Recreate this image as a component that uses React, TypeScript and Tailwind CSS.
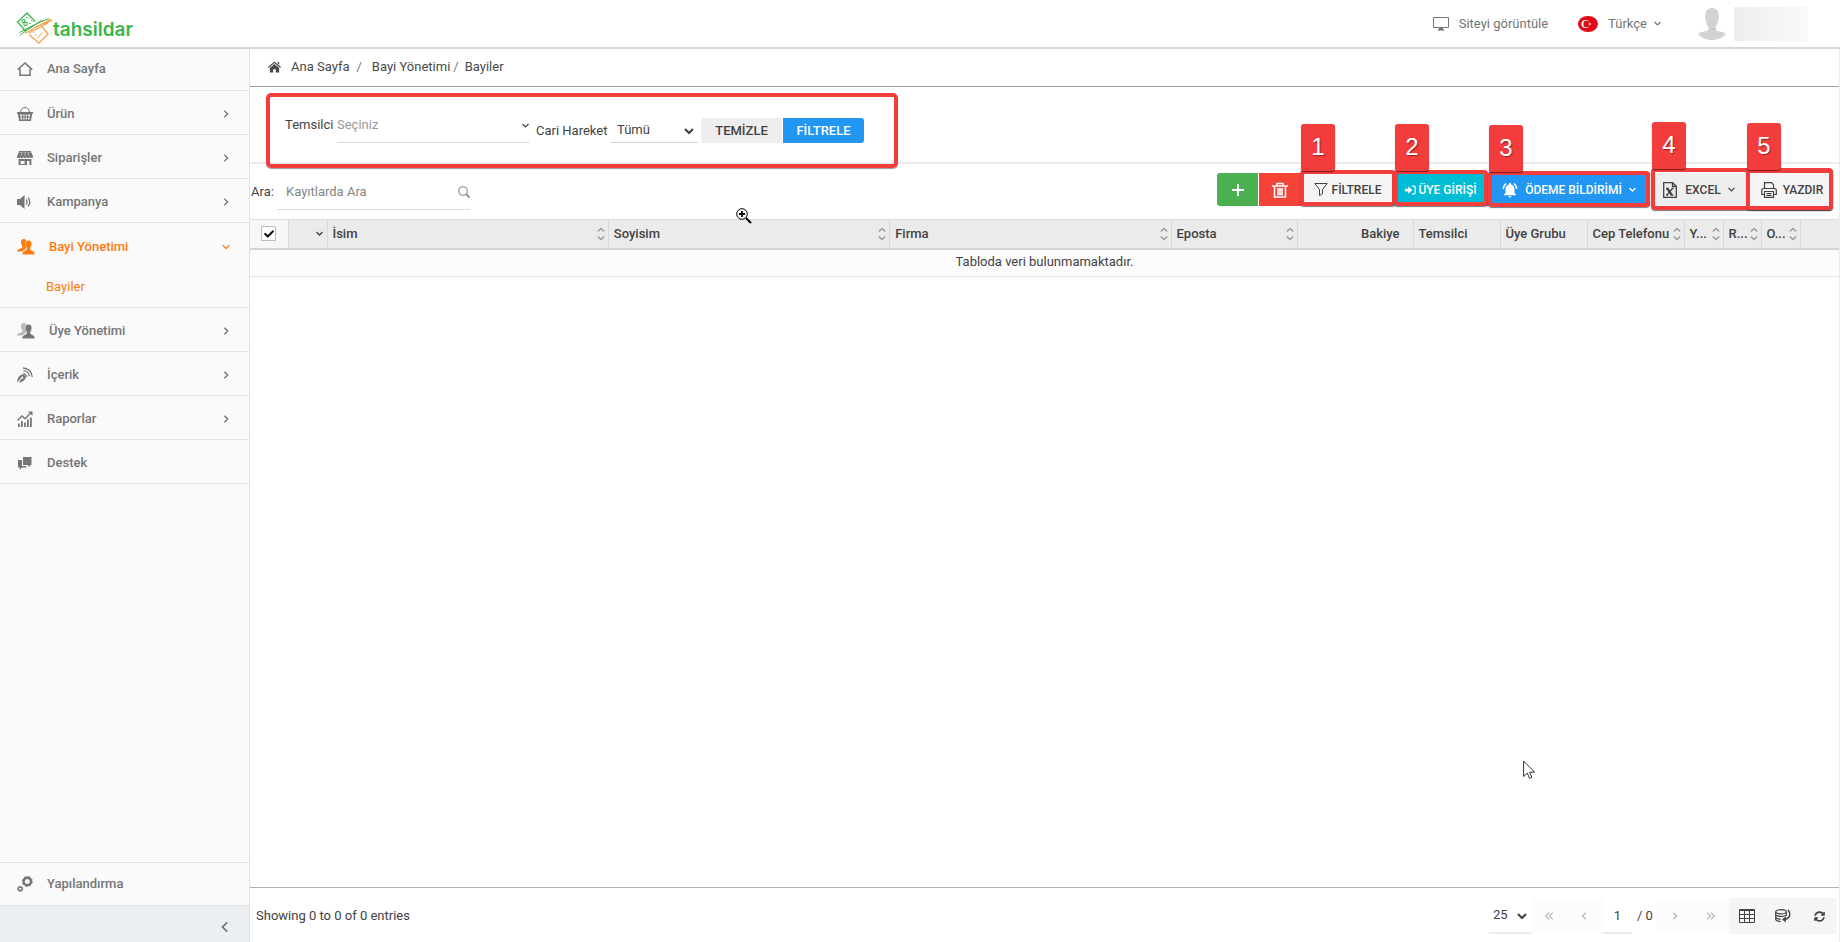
import type { ReactNode } from 'react';
import clsx from 'clsx';
import { MdNotificationsActive } from 'react-icons/md';
import { FaSyncAlt, FaCheck } from 'react-icons/fa';

type Dir = 'left' | 'right' | 'down' | 'up';

const chevrons: Record<Dir, string> = {
  left: 'M7 2 3 6l4 4',
  right: 'M4 2l4 4-4 4',
  down: 'M2 4l4 4 4-4',
  up: 'M2 8l4-4 4 4',
};

const Chevron = ({ dir, size = 10, width = 1.6, className }: { dir: Dir; size?: number; width?: number; className?: string }) => (
  <svg viewBox="0 0 12 12" width={size} height={size} fill="none" stroke="currentColor" strokeWidth={width} className={clsx('shrink-0', className)}>
    <path d={chevrons[dir]} />
  </svg>
);

const DoubleChevron = ({ dir }: { dir: 'left' | 'right' }) => (
  <svg viewBox="0 0 12 12" width="10" height="10" fill="none" stroke="currentColor" strokeWidth="1.5">
    <path d={dir === 'left' ? 'M6 2 2 6l4 4M10.500 2l-4 4 4 4' : 'M6 2l4 4-4 4M1.500 2l4 4-4 4'} />
  </svg>
);

const Icon = ({ children, size = 16 }: { children: ReactNode; size?: number }) => (
  <svg viewBox="0 0 16 16" width={size} height={size} fill="currentColor" className="shrink-0">
    {children}
  </svg>
);

const HomeIcon = () => (
  <Icon>
    <path d="M.8 8.600 8 2l7.200 6.600M3 8v6.200h10V8" fill="none" stroke="currentColor" strokeWidth="1.5" />
  </Icon>
);

const BasketIcon = () => (
  <Icon>
    <path d="M3.600 6.500C3.600 3.500 5.500 1.500 8 1.500s4.400 2 4.400 5" fill="none" stroke="currentColor" />
    <path d="M0 6h16v1.800h-.8L13.900 15H2.100L.8 7.800H0z" />
    <path d="M3 8.600h2.200v1.800H3.200zM6.300 8.600h1.300v1.800H6.300zM8.700 8.600h1.300v1.800H8.700zM11 8.600h2.200l-.3 1.800H11zM3.400 11.600h1.800v1.800H3.700zM6.300 11.600h1.300v1.800H6.300zM8.700 11.600h1.300v1.800H8.700zM11 11.600h1.700l-.3 1.800H11z" fill="#fafafa" />
  </Icon>
);

const StoreIcon = () => (
  <Icon>
    <path d="M2 1h12v1.200H2zM1.600 2.600h12.800L16 6.400c0 1-.7 1.600-1.600 1.600s-1.600-.6-1.600-1.600c0 1-.7 1.600-1.600 1.600s-1.600-.6-1.600-1.600C9.600 7.400 8.900 8 8 8s-1.600-.6-1.600-1.600C6.400 7.400 5.700 8 4.800 8s-1.600-.6-1.600-1.600C3.200 7.400 2.500 8 1.600 8S0 7.400 0 6.400z" />
    <path d="M1.600 9h12.800v6H1.600z" />
    <path d="M3.600 11h4v3h-4zM10 11h2.400v4H10z" fill="#fafafa" />
    <path d="M4.500 2.600v3.200M8 2.600v3.200M11.500 2.600v3.200" stroke="#fafafa" strokeWidth=".5" />
  </Icon>
);

const SpeakerIcon = () => (
  <Icon>
    <path d="M0 5h3l4.500-4v14L3 11H0z" />
    <path d="M9 5.500c1.300 1.200 1.300 3.800 0 5M11 3.800c2.400 2.200 2.400 6.200 0 8.400" fill="none" stroke="currentColor" strokeWidth="1.300" />
  </Icon>
);

const UsersIcon = ({ faded }: { faded?: boolean }) => (
  <svg viewBox="0 0 18 16" width="18" height="16" fill="currentColor" className="shrink-0">
    <path opacity={faded ? 0.5 : 1} d="M7 0c-2 0-3.200 1.300-3 3.600.1 1.600.7 2.800 1.300 3.600.2 1.300-.3 1.700-1.600 2.200C1.800 10.100 0 10.500 0 12.500h5l4-3V1C8.500.3 7.800 0 7 0z" />
    <path stroke="#fafafa" strokeWidth=".5" d="M11.500 1.200c2.200 0 3.500 1.500 3.300 4-.1 1.700-.8 3-1.500 3.900-.1 1.400.3 1.900 1.500 2.400 1.700.7 3.200 1.400 3.200 4.200H5c0-2.800 1.500-3.500 3.200-4.200 1.200-.5 1.600-1 1.500-2.400C9 8.200 8.300 6.900 8.200 5.200c-.2-2.500 1.100-4 3.300-4z" />
  </svg>
);

const PenIcon = () => (
  <Icon>
    <path d="M0 15.500C.6 11 1.500 8.700 6 7l3 3c-1.200 4-3.500 5-7.500 5.500l3.600-3.900a1 1 0 1 0-.8-.8z" />
    <path d="M6.500 6.300l3.400 3.400M6.500 3.600c3.200 0 5.500 2.500 5.700 5.700M6 1c5 0 8.800 3.600 9.200 9" fill="none" stroke="currentColor" strokeWidth="1.300" />
  </Icon>
);

const ReportIcon = () => (
  <Icon>
    <path d="M1 12.500h1.800V16H1zM4 10h1.800v6H4zM7 11.500h1.800V16H7zM10 8.500h1.800V16H10zM13 6.500h1.800V16H13z" />
    <path d="M.6 9.500 5 5l3 2.800 5.500-5.600" fill="none" stroke="currentColor" strokeWidth="1.400" />
    <path d="M11 .5h4.500V5z" />
  </Icon>
);

const ChatIcon = () => (
  <Icon>
    <path d="M6 2h8.500v8H13v2.300L10.500 10H6z" />
    <path d="M1 5h4v6h4.500v1.500H5L2.800 15v-2.500H1z" />
  </Icon>
);

const GearsIcon = () => (
  <Icon>
    <circle cx="10.300" cy="5.500" r="3.700" fill="none" stroke="currentColor" strokeWidth="2.400" />
    <circle cx="10.300" cy="5.500" r="5" fill="none" stroke="currentColor" strokeWidth=".9" strokeDasharray="1.960" />
    <circle cx="3.200" cy="12.800" r="1.900" fill="none" stroke="currentColor" strokeWidth="1.500" />
    <circle cx="3.200" cy="12.800" r="2.700" fill="none" stroke="currentColor" strokeWidth=".7" strokeDasharray="1.060" />
  </Icon>
);

const Logo = () => (
  <a href="#" className="flex items-center font-['Inter',sans-serif] text-[19px] leading-6 font-semibold text-[#3bb54a]">
    <svg viewBox="0 0 36 32" width="36" height="32" fill="none" strokeWidth="1">
      <path d="M19 9.500 11 1 1.500 10l8 9" stroke="#3bb54a" strokeWidth="1.300" />
      <circle cx="7.500" cy="9" r="1.500" stroke="#3bb54a" strokeWidth="1.200" />
      <circle cx="9.500" cy="11.800" r="1.700" stroke="#3bb54a" strokeWidth="1.200" />
      <path d="M12 5.500l1.500 1.500M15 8l1.500 1.500M10 5l1 1M13 11l2 1" stroke="#3bb54a" />
      <path d="M3.500 20.500 22 11l11-4.500M4 23 26 8M7 18.500 18 13.500" stroke="#3bb54a" />
      <path d="M13 22.500l10 8.500 9-9-7-8.500" stroke="#f7a04b" strokeWidth="1.300" />
      <path d="M9 21.500 24 13 35.500 7M20 14.500 36 8.500M13 21 32 11" stroke="#f7a04b" strokeWidth="1.200" />
      <path d="M19 22l1.500 1.500M21 26l2.500-2 3-3.500M17 21l1-1" stroke="#f7a04b" />
    </svg>
    <span className="pt-1 pl-px">tahsildar</span>
  </a>
);

const Header = () => (
  <header className="flex h-[49px] shrink-0 items-center justify-between border-b-2 border-[#d8d8d8] bg-white pr-8 pl-4 text-[#757575]">
    <div className="pt-2">
      <Logo />
    </div>
    <div className="flex items-center">
      <a href="#" className="flex items-center gap-[10px]">
        <svg viewBox="0 0 16 14" width="16" height="14" fill="none" stroke="currentColor">
          <path d="M.5.500h15v10H.5z" />
          <path d="M6.500 11h3v2h1.500H5h1.500z" fill="currentColor" />
        </svg>
        Siteyi görüntüle
      </a>
      <button type="button" className="ml-[30px] flex items-center">
        <svg viewBox="0 0 20 16" width="20" height="16">
          <ellipse cx="10" cy="8" rx="10" ry="8" fill="#e30a17" />
          <circle cx="7.500" cy="8" r="4" fill="#fff" />
          <circle cx="8.500" cy="8" r="3.200" fill="#e30a17" />
          <path d="M10 8l1.200-.4.100-1.200.8 1 1.200-.4-.7 1 .7 1-1.200-.4-.8 1-.1-1.200z" fill="#fff" />
        </svg>
        <span className="mr-[6px] ml-[10px]">Türkçe</span>
        <Chevron dir="down" size={9} width={1.5} />
      </button>
      <svg viewBox="0 0 28 32" width="28" height="32" className="ml-[36px]" fill="#d3d3d3">
        <path d="M14 0c4.500 0 7 3.500 6.800 9-.2 5.500-2.800 10.500-4.300 11.500h-5C10 19.500 7.400 14.500 7.200 9 7 3.500 9.500 0 14 0z" />
        <path d="M10.500 20.500h7l1 2.500c5 .6 7.500 1.500 9.500 2.700C25 29.500 20 32 14 32S3 29.500 0 25.700C2 24.500 4.500 23.600 9.500 23z" />
        <path d="M10.500 19.500c2.500 1.500 4.500 1.500 7 0l.5 2.500h-4z" fill="#c0c0c0" />
      </svg>
      <div className="ml-2 h-[34px] w-[74px] bg-linear-to-r from-[#eeeeee] to-[#f9f9f9]" />
    </div>
  </header>
);

interface MenuItem {
  label: string;
  icon: ReactNode;
  arrow?: boolean;
}

const MenuLink = ({ item, active }: { item: MenuItem; active?: boolean }) => (
  <a href="#" className={clsx('flex flex-1 items-center pr-[18px] pl-[17px] font-medium', active && 'font-bold text-[#ff7a0f]')}>
    {item.icon}
    <span className="ml-[14px] flex-1">{item.label}</span>
    {item.arrow && <Chevron dir={active ? 'down' : 'right'} />}
  </a>
);

const row = 'flex h-11 border-b border-[#e4e4e4] pt-[2px]';

const topItems: MenuItem[] = [
  { label: 'Ürün', icon: <BasketIcon />, arrow: true },
  { label: 'Siparişler', icon: <StoreIcon />, arrow: true },
  { label: 'Kampanya', icon: <SpeakerIcon />, arrow: true },
];

const bottomItems: MenuItem[] = [
  { label: 'Üye Yönetimi', icon: <UsersIcon faded />, arrow: true },
  { label: 'İçerik', icon: <PenIcon />, arrow: true },
  { label: 'Raporlar', icon: <ReportIcon />, arrow: true },
  { label: 'Destek', icon: <ChatIcon /> },
];

const Sidebar = () => (
  <nav className="flex w-[250px] shrink-0 flex-col border-r border-[#e2e2e2] bg-[#fafafa] text-[#757575]">
    <ul className="flex-1">
      <li className="flex h-[42px] border-b border-[#e4e4e4] pb-[2px]">
        <MenuLink item={{ label: 'Ana Sayfa', icon: <HomeIcon /> }} />
      </li>
      {topItems.map((item) => (
        <li key={item.label} className={row}>
          <MenuLink item={item} />
        </li>
      ))}
      <li className="border-b border-[#e4e4e4]">
        <div className="flex h-11 pt-[3px]">
          <MenuLink active item={{ label: 'Bayi Yönetimi', icon: <UsersIcon />, arrow: true }} />
        </div>
        <a href="#" className="flex h-10 items-center pl-[46px] text-[#ff7a0f]">
          Bayiler
        </a>
      </li>
      {bottomItems.map((item) => (
        <li key={item.label} className={row}>
          <MenuLink item={item} />
        </li>
      ))}
    </ul>
    <div className="flex h-11 border-y border-[#e4e4e4]">
      <MenuLink item={{ label: 'Yapılandırma', icon: <GearsIcon /> }} />
    </div>
    <button type="button" aria-label="Menüyü daralt" className="flex h-9 items-center justify-end bg-[#eceff1] pt-[6px] pr-4">
      <Chevron dir="left" size={14} width={1.5} />
    </button>
  </nav>
);

const Breadcrumb = () => (
  <div className="flex h-[38px] shrink-0 items-center border-b border-[#9e9e9e] pb-[2px] pl-[18px] text-[#4a4a4a]">
    <svg viewBox="0 0 14 12" width="13" height="12" fill="currentColor">
      <path d="M7 0l7 6-.8 1L7 1.800.8 7 0 6zM10.500.5H12v3l-1.500-1.300z" />
      <path d="M7 2.900l5 4.200V12H8.400V8.500H5.600V12H2V7.100z" />
    </svg>
    <a href="#" className="ml-[10px]">Ana Sayfa</a>
    <span className="mr-[10px] ml-[7px] text-[#777777]">/</span>
    <a href="#">Bayi Yönetimi</a>
    <span className="mr-[6px] ml-[3px] text-[#777777]">/</span>
    <a href="#">Bayiler</a>
  </div>
);

const FilterPanel = () => (
  <div className="flex border-b-2 border-[#ececec] pl-4">
    <form className="relative flex items-end pt-5 pr-[34px] pb-[19px] pl-[19px]" onSubmit={(e) => e.preventDefault()}>
      <label htmlFor="temsilci" className="w-[52px] leading-9">Temsilci</label>
      <div className="relative flex items-center">
        <select id="temsilci" className="h-9 w-[193px] appearance-none border-b border-[#dcdcdc] bg-transparent text-[#999999]">
          <option>Seçiniz</option>
        </select>
        <Chevron dir="down" size={9} className="pointer-events-none absolute right-0" />
      </div>
      <label htmlFor="hareket" className="ml-[6px] w-[75px] whitespace-nowrap leading-[25px]">Cari Hareket</label>
      <div className="relative flex items-center">
        <select id="hareket" className="h-[25px] w-[87px] appearance-none border-b border-[#d0d0d0] bg-transparent pl-[6px]">
          <option>Tümü</option>
        </select>
        <Chevron dir="down" size={12} width={2.2} className="pointer-events-none absolute right-[3px]" />
      </div>
      <button type="reset" className="ml-[3px] h-[25px] w-[81px] rounded-l-[3px] bg-[#eeeeee] font-medium">TEMİZLE</button>
      <button type="submit" className="ml-px h-[25px] w-[81px] rounded-r-[3px] bg-[#2196f3] font-medium text-white">FİLTRELE</button>
      <span className="pointer-events-none absolute inset-x-0 top-[6px] -bottom-[6px] z-10 rounded-[5px] border-4 border-[#f33c3c] shadow-[0_1px_1px_#0006]" />
    </form>
  </div>
);

// Numbered red frame laid over a toolbar button
const Marked = ({ step, frame, children }: { step: number; frame: string; children: ReactNode }) => (
  <div className="relative">
    {children}
    <span className={clsx('pointer-events-none absolute rounded-[4px] border-4 border-[#f33c3c] shadow-[0_1px_1px_#0008]', frame)}>
      <span className="absolute -left-[3px] bottom-full mb-[3px] flex h-[47px] w-[34px] items-center justify-center rounded-[3px] bg-[#f33c3c] pb-[2px] font-['Liberation_Sans',sans-serif] text-2xl text-white shadow-[0_1px_1px_#0008] text-shadow-[1px_1px_1px_#0006]">
        {step}
      </span>
    </span>
  </div>
);

const btn = 'flex h-[33px] items-center justify-center whitespace-nowrap text-xs font-medium';

const Toolbar = () => (
  <div className="flex h-[55px] items-center justify-between pr-[6px]">
    <div className="flex items-center">
      <label htmlFor="ara" className="w-[27px] pl-px">Ara:</label>
      <div className="relative flex items-center">
        <input id="ara" type="text" placeholder="Kayıtlarda Ara" className="h-9 w-[193px] border-b border-[#dcdcdc] pl-[9px] placeholder:text-[#858585]" />
        <svg viewBox="0 0 12 12" width="12" height="12" fill="none" stroke="#888888" className="absolute right-0">
          <circle cx="5" cy="5" r="4.300" strokeWidth="1.100" />
          <path d="M8.200 8.200 11.500 11.500" strokeWidth="1.800" />
        </svg>
      </div>
    </div>
    <div className="flex items-center pb-1">
      <button type="button" aria-label="Ekle" className={clsx(btn, 'w-[41px] rounded-l-[3px] bg-[#4caf50] text-white')}>
        <svg viewBox="0 0 12 12" width="12" height="12" stroke="currentColor" strokeWidth="2">
          <path d="M6 0v12M0 6h12" />
        </svg>
      </button>
      <button type="button" aria-label="Sil" className={clsx(btn, 'ml-px w-[42px] bg-[#f44336] text-white')}>
        <svg viewBox="0 0 16 16" width="16" height="16" fill="none" stroke="currentColor" strokeWidth="1.500">
          <path d="M0 4h16M5 4V1.500h6V4M2.500 4v11h11V4M6 7v5.500M8 7v5.500M10 7v5.500M5 7h6M5 12.500h6" />
        </svg>
      </button>
      <Marked step={1} frame="-left-px -right-[2px] -top-[3px] bottom-0">
        <button type="button" className={clsx(btn, 'w-[93px] gap-1 bg-[#f5f5f5]')}>
          <svg viewBox="0 0 14 13" width="14" height="13" fill="none" stroke="currentColor">
            <path d="M.8.500h12.400L8.500 6.500v4.200L5.500 12.500v-6z" />
          </svg>
          FİLTRELE
        </button>
      </Marked>
      <Marked step={2} frame="left-0 right-0 -top-[3px] bottom-0">
        <button type="button" className={clsx(btn, 'w-[94px] gap-[2px] bg-[#00bcd4] text-white')}>
          <svg viewBox="0 0 12 10" width="11" height="10" fill="currentColor">
            <path d="M0 3.500h3.500V1L8 5 3.500 9V6.500H0z" />
            <path d="M7.500.8H10c.8 0 1.200.5 1.200 1.200v6c0 .7-.4 1.200-1.200 1.200H7.500" fill="none" stroke="currentColor" strokeWidth="1.300" />
          </svg>
          ÜYE GİRİŞİ
        </button>
      </Marked>
      <Marked step={3} frame="left-0 right-0 -top-[2px] -bottom-px">
        <button type="button" className={clsx(btn, 'w-[162px] bg-[#2196f3] text-white')}>
          <MdNotificationsActive size={18} />
          <span className="mx-[6px]">ÖDEME BİLDİRİMİ</span>
          <Chevron dir="down" size={9} width={1.8} />
        </button>
      </Marked>
      <Marked step={4} frame="left-px -right-[86px] -top-[5px] -bottom-1">
        <button type="button" className={clsx(btn, 'w-[97px] bg-[#eeeeee] pr-1 pl-[6px]')}>
          <svg viewBox="0 0 14 16" width="14" height="16" fill="none" stroke="currentColor" strokeWidth="1.300">
            <path d="M.7.700h9l3.600 3.600v11H.7zM9.500.700v3.800h3.800" />
            <path d="M4.300 6.500l4.500 6.500" strokeWidth="2.200" />
            <path d="M9.500 6.500 4 13M3 6.500h2.500M8.500 6.500h2M3 13h2M7.800 13h2.500" />
          </svg>
          <span className="mr-[6px] ml-2">EXCEL</span>
          <Chevron dir="down" size={9} width={1.5} />
        </button>
      </Marked>
      <Marked step={5} frame="-left-px right-0 -top-[4px] -bottom-1">
        <button type="button" className={clsx(btn, 'w-[86px] gap-[6px] bg-[#f5f5f5] pl-1')}>
          <svg viewBox="0 0 16 16" width="16" height="16" fill="none" stroke="currentColor" strokeWidth="1.200">
            <path d="M3.500 6.500V.7h7l2 2v3.800M3.500 12.500H.7v-4c0-1.300.8-2 2-2h10.600c1.200 0 2 .7 2 2v4h-2.800M3.500 9.500h9v5.800h-9zM5.500 11.500h5M5.500 13.300h5" />
          </svg>
          YAZDIR
        </button>
      </Marked>
    </div>
  </div>
);

const Sort = () => (
  <svg viewBox="0 0 8 14" width="8" height="14" fill="none" stroke="#999999" strokeWidth="1.400" className="shrink-0">
    <path d="M.8 4.500 4 1.500l3.200 3M.8 9.500 4 12.500l3.200-3" />
  </svg>
);

const columns = [
  { label: 'İsim', width: '', sort: true },
  { label: 'Soyisim', width: '', sort: true },
  { label: 'Firma', width: '', sort: true },
  { label: 'Eposta', width: 'w-[126px]', sort: true },
  { label: 'Bakiye', width: 'w-[116px]', right: true },
  { label: 'Temsilci', width: 'w-[87px]' },
  { label: 'Üye Grubu', width: 'w-[87px]' },
  { label: 'Cep Telefonu', width: 'w-[97px]', sort: true },
  { label: 'Y...', width: 'w-[39px]', sort: true },
  { label: 'R...', width: 'w-[38px]', sort: true },
  { label: 'O...', width: 'w-[39px]', sort: true },
  { label: '', width: 'w-[39px]' },
];

const DataTable = () => (
  <table className="w-full table-fixed border-collapse">
    <thead>
      <tr className="h-[29px] border-t border-b-2 border-t-[#e0e0e0] border-b-[#d4d4d4] bg-[#ebebeb]">
        <th className="w-[38px] bg-[#f7f7f7] p-0">
          <label className="relative mx-auto flex size-[15px] items-center justify-center">
            <input type="checkbox" defaultChecked aria-label="Tümünü seç" className="size-[15px] appearance-none border border-[#bdbdbd] bg-white" />
            <FaCheck size={10} className="pointer-events-none absolute text-black" />
          </label>
        </th>
        <th className="w-[39px] border-l border-[#d8d8d8] p-0 pr-[3px]">
          <Chevron dir="down" size={9} width={1.8} className="ml-auto" />
        </th>
        {columns.map((col) => (
          <th key={col.label} className={clsx('border-l border-[#d8d8d8] p-0 font-medium', col.width)}>
            <div className={clsx('flex items-center whitespace-nowrap pl-[5px]', col.right ? 'justify-end pr-[13px]' : 'justify-between pr-[3px]')}>
              {col.label}
              {col.sort && <Sort />}
            </div>
          </th>
        ))}
      </tr>
    </thead>
    <tbody>
      <tr className="h-7 border-b border-[#e4e4e4] bg-[#fcfcfc]">
        <td colSpan={14} className="p-0 pb-px text-center">Tabloda veri bulunmamaktadır.</td>
      </tr>
    </tbody>
  </table>
);

const pager = 'flex h-9 w-9 items-center justify-center';

const Footer = () => (
  <footer className="flex h-[55px] shrink-0 items-center justify-between border-t border-[#b0b0b0] pt-[2px] pr-[2px] pl-[6px]">
    <span>Showing 0 to 0 of 0 entries</span>
    <div className="flex items-center">
      <div className="relative flex items-center">
        <select aria-label="Sayfa boyutu" className="h-9 w-[42px] appearance-none border-b-2 border-[#ececec] bg-transparent pl-1">
          <option>25</option>
        </select>
        <Chevron dir="down" size={12} width={2.2} className="pointer-events-none absolute right-[3px]" />
      </div>
      <div className="flex bg-[#fcfcfc] text-[#b8b8b8]">
        <button type="button" aria-label="İlk" className={pager}><DoubleChevron dir="left" /></button>
        <button type="button" aria-label="Önceki" className={pager}><Chevron dir="left" /></button>
      </div>
      <input type="text" defaultValue="1" aria-label="Sayfa" className="h-9 w-[29px] border-b-2 border-[#ececec] text-center" />
      <span className="w-[25px] pl-[5px]">/ 0</span>
      <div className="flex bg-[#fcfcfc] text-[#b8b8b8]">
        <button type="button" aria-label="Sonraki" className={pager}><Chevron dir="right" /></button>
        <button type="button" aria-label="Son" className={pager}><DoubleChevron dir="right" /></button>
      </div>
      <div className="flex rounded-r-[3px] bg-[#f5f5f5]">
        <button type="button" aria-label="Sütunlar" className={pager}>
          <svg viewBox="0 0 16 14" width="16" height="14" fill="none" stroke="currentColor" strokeWidth="1">
            <path d="M.5.500h15v13H.5zM.5 1.500h15M.5 5.500h15M.5 9.500h15M5.500.500v13M10.500.500v13" />
          </svg>
        </button>
        <button type="button" aria-label="Veriyi yenile" className={pager}>
          <svg viewBox="0 0 16 14" width="16" height="14" fill="none" stroke="currentColor" strokeWidth="1.200">
            <ellipse cx="6" cy="2.800" rx="5.300" ry="2.100" />
            <path d="M.7 2.800v7.500c0 1.200 2 2 5 2.200M.7 5.300c0 1.200 2.300 2.100 5.300 2.100s5.300-.9 5.300-2.100M.7 8c0 1.100 2 2 5 2.100M11.300 2.800v4" />
            <path d="M13 1c2.500 2.500 3 8-3 9.300" strokeWidth="1.500" />
            <path d="M10.800 7.300 7 10.500l3.800 3z" fill="currentColor" stroke="none" />
          </svg>
        </button>
        <button type="button" aria-label="Yenile" className={pager}><FaSyncAlt size={11} /></button>
      </div>
    </div>
  </footer>
);

export default function App() {
  return (
    <div className="relative flex min-h-screen flex-col overflow-hidden bg-white font-['Roboto',sans-serif] text-[13px] leading-5 text-[#424242]">
      <Header />
      <div className="flex flex-1">
        <Sidebar />
        <main className="flex min-w-0 flex-1 flex-col border-r border-[#ececec]">
          <Breadcrumb />
          <FilterPanel />
          <Toolbar />
          <DataTable />
          <div className="flex-1" />
          <Footer />
        </main>
      </div>

      {/* Mouse pointers */}
      <svg viewBox="0 0 16 16" width="16" height="16" fill="none" stroke="#000" className="absolute top-[208px] left-[736px]">
        <circle cx="6" cy="6" r="5.300" fill="#fff" />
        <path d="M3 6h6M6 3v6" strokeWidth="1.800" />
        <path d="M10 10l5 5" strokeWidth="2" />
      </svg>
      <svg viewBox="0 0 12 19" width="12" height="19" fill="#fff" stroke="#333" className="absolute top-[760px] left-[1523px]">
        <path d="M.6 1v15.500l3.600-3.400 2.400 5.300 2.300-1-2.300-5.200h5z" />
      </svg>
    </div>
  );
}
